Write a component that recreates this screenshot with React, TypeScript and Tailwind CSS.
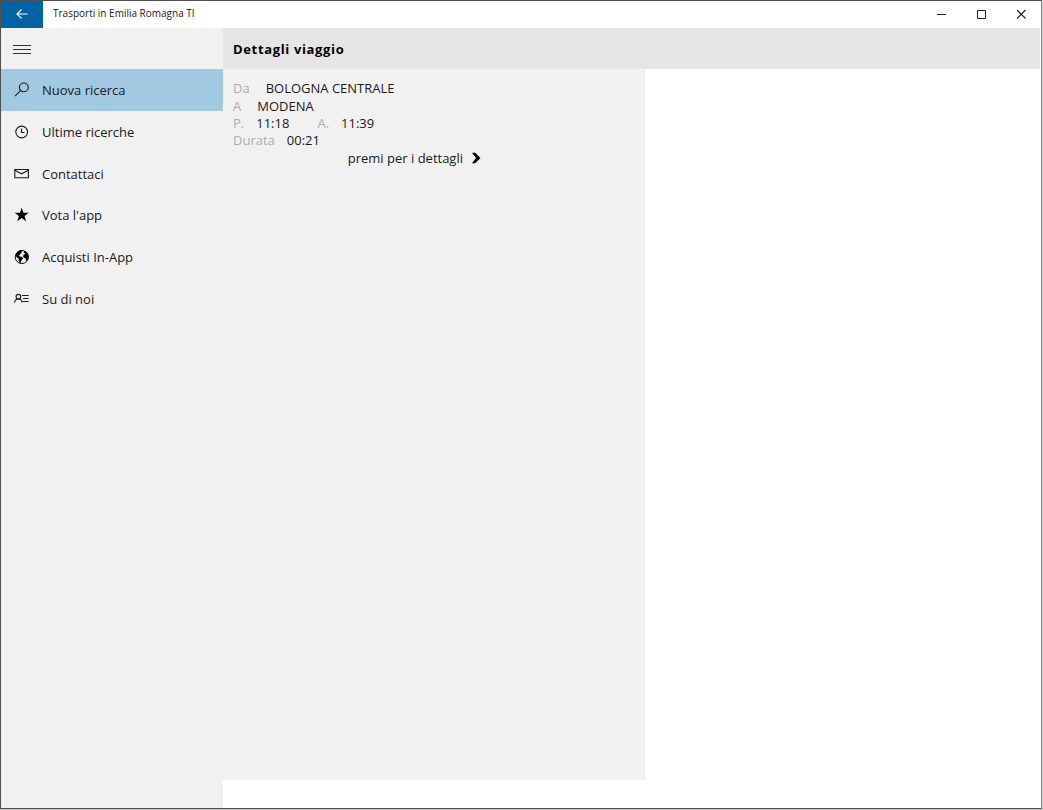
import type { ReactNode } from "react";
import clsx from "clsx";

function SearchIcon() {
  return (
    <svg width="16" height="16" viewBox="0 0 16 16" fill="none" stroke="currentColor" strokeWidth="1.1">
      <circle cx="9.8" cy="5.4" r="4.4" />
      <path d="M6.5 8.7 1 14.2" />
    </svg>
  );
}

function ClockIcon() {
  return (
    <svg width="16" height="16" viewBox="0 0 16 16" fill="none" stroke="currentColor" strokeWidth="1.1">
      <circle cx="7.7" cy="8" r="5.9" />
      <path d="M7.5 4.4v4.1h3" />
    </svg>
  );
}

function MailIcon() {
  return (
    <svg width="16" height="16" viewBox="0 0 16 16" fill="none" stroke="currentColor" strokeWidth="1.1">
      <path d="M.8 3.5h13.6v8.2H.8z" />
      <path d="M.8 4.2 7.6 7.8l6.8-3.6" />
    </svg>
  );
}

function StarIcon() {
  return (
    <svg width="16" height="16" viewBox="0 0 16 16" fill="#000">
      <path d="M7.7.8l1.7 5h5.4l-4.3 3.2 1.6 5.3-4.4-3.2-4.4 3.2L4.9 9 .6 5.8H6z" />
    </svg>
  );
}

function GlobeIcon() {
  return (
    <svg width="16" height="16" viewBox="0 0 16 16">
      <circle cx="7.8" cy="8" r="6.6" fill="#f1f1f1" stroke="#111" />
      <path
        d="M2 5.2C3 2.9 5 1.4 7.6 1.3l.9.9-1.3.9.5 1-1.4.6-.4 1.4-1.3.4 1.1 1 1.9.2 1.5 1.4-.6 1.5-1.3 1-.3 2.2-1.1.2-1-2.3-.2-2-1.9-1.4-1-1.5z"
        fill="#000"
      />
      <path
        d="M10 2l1.8.4c1.8 1.2 2.6 3 2.7 5.2l-.5 2.5-1.3 1.8-1-.6-.1-2-1.7-.5-.9-1.6.8-1.7 1.6-.6-.6-.9-1.5.3.8-1.2z"
        fill="#000"
      />
    </svg>
  );
}

function ContactIcon() {
  return (
    <svg width="16" height="16" viewBox="0 0 16 16" fill="none" stroke="currentColor" strokeWidth="1.1">
      <circle cx="4.4" cy="5.7" r="2.3" />
      <path d="M.6 11.6C.8 9.3 2.3 8 4.4 8s3.5 1.3 3.7 3.6" />
      <path d="M8 4.5h6.6M9 7.5h5.6M8.6 10.5h6" />
    </svg>
  );
}

const navItems: { label: string; icon: ReactNode; active?: boolean }[] = [
  { label: "Nuova ricerca", icon: <SearchIcon />, active: true },
  { label: "Ultime ricerche", icon: <ClockIcon /> },
  { label: "Contattaci", icon: <MailIcon /> },
  { label: "Vota l'app", icon: <StarIcon /> },
  { label: "Acquisti In-App", icon: <GlobeIcon /> },
  { label: "Su di noi", icon: <ContactIcon /> },
];

function TitleBar() {
  return (
    <div className="flex h-[27px] items-stretch bg-white">
      <button aria-label="Indietro" className="flex w-[42px] items-center justify-center bg-[#0063a3] pb-px text-white">
        <svg width="12" height="12" viewBox="0 0 12 12" fill="none" stroke="currentColor" strokeWidth="1.2">
          <path d="M11.5 6H1M5.5 1.5 1 6l4.5 4.5" />
        </svg>
      </button>
      <span className="flex-1 self-center pb-0.5 pl-2.5 text-[10px]">Trasporti in Emilia Romagna TI</span>
      <button aria-label="Riduci a icona" className="flex w-10 items-center justify-center pb-0.5">
        <svg width="10" height="10" viewBox="0 0 10 10" stroke="#222">
          <path d="M1 5.5h9" />
        </svg>
      </button>
      <button aria-label="Ingrandisci" className="flex w-10 items-center justify-center pb-0.5">
        <svg width="10" height="10" viewBox="0 0 10 10" fill="none" stroke="#222">
          <path d="M1.5 1.5h8v8h-8z" />
        </svg>
      </button>
      <button aria-label="Chiudi" className="flex w-10 items-center justify-center pb-0.5">
        <svg width="10" height="10" viewBox="0 0 10 10" stroke="#222" strokeWidth="1.1">
          <path d="M1 1l8.5 8.5M9.5 1 1 9.5" />
        </svg>
      </button>
    </div>
  );
}

function Sidebar() {
  return (
    <aside className="w-[222px] shrink-0 bg-[#f1f1f1]">
      <button aria-label="Menu" className="flex h-[41px] w-[42px] items-center justify-center pt-px">
        <svg width="18" height="11" viewBox="0 0 18 11" stroke="#333">
          <path d="M0 1.5h18M0 5.5h18M0 9.5h18" />
        </svg>
      </button>
      <nav className="grid h-[250px] grid-rows-6">
        {navItems.map((item) => (
          <a
            key={item.label}
            href="#"
            className={clsx("flex items-center pt-px pl-[13px]", item.active && "bg-[#a1cae2]")}
          >
            {item.icon}
            <span className="pt-px pl-3">{item.label}</span>
          </a>
        ))}
      </nav>
    </aside>
  );
}

function JourneySummary() {
  return (
    <button className="grid h-[87px] w-[248px] grid-rows-5 items-center text-left">
      <span className="flex gap-4">
        <span className="text-[#adadad]">Da</span>
        <span>BOLOGNA CENTRALE</span>
      </span>
      <span className="flex gap-4">
        <span className="text-[#adadad]">A</span>
        <span>MODENA</span>
      </span>
      <span className="flex gap-3">
        <span className="text-[#adadad]">P.</span>
        <span>11:18</span>
        <span className="pl-4 text-[#adadad]">A.</span>
        <span>11:39</span>
      </span>
      <span className="flex gap-3">
        <span className="text-[#adadad]">Durata</span>
        <span>00:21</span>
      </span>
      <span className="flex items-center justify-end gap-2">
        premi per i dettagli
        <svg width="10" height="12" viewBox="0 0 10 12" fill="#000">
          <path d="M1 .8h3.2L9.5 6l-5.3 5.2H1L5 6z" />
        </svg>
      </span>
    </button>
  );
}

export default function App() {
  return (
    <div className="flex min-h-screen bg-[#cfcfcf] pr-px pb-px font-['Open_Sans','Noto_Sans',sans-serif] text-[13px] leading-[17px] text-[#1a1a1a]">
      <div className="flex flex-1 flex-col border border-[#4f4f4f] border-r-[#8a8a8a] bg-white">
        <TitleBar />
        <div className="flex flex-1 pr-px">
          <Sidebar />
          <main className="flex flex-1 flex-col pb-7">
            <header className="flex h-[41px] items-center bg-[#e5e5e5] pt-px pl-2.5">
              <h1 className="font-bold tracking-wider text-black">Dettagli viaggio</h1>
            </header>
            <section className="w-[422px] max-w-full flex-1 bg-[#f1f1f1] px-2.5 pt-[11px]">
              <JourneySummary />
            </section>
          </main>
        </div>
      </div>
    </div>
  );
}
